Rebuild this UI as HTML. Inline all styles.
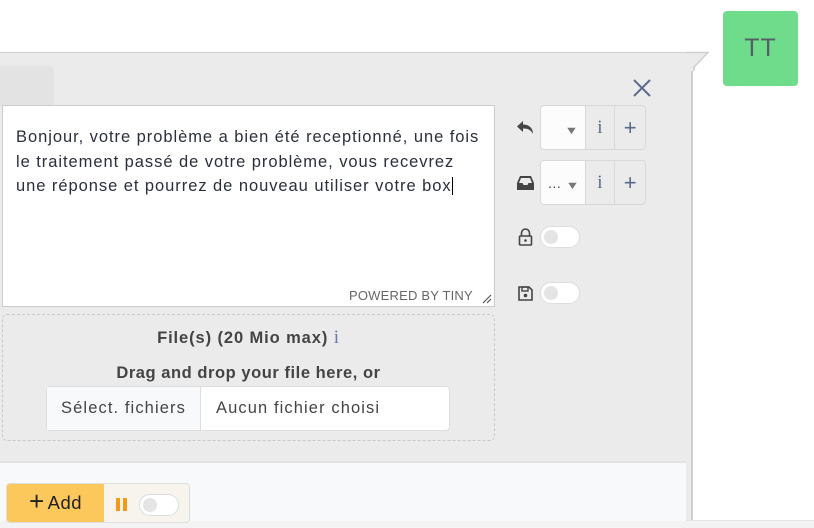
<!DOCTYPE html>
<html><head><meta charset="utf-8"><style>
*{box-sizing:border-box;margin:0;padding:0}
body{width:814px;height:528px;position:relative;background:#fff;font-family:"Liberation Sans",sans-serif;overflow:hidden;color:#333}
.abs{position:absolute}
.panel{left:0;top:52px;width:693px;height:470px;background:#ebebeb;border-top:1px solid #cfcfcf;border-right:2px solid #cfcfcf}
.tab{left:0;top:66px;width:54px;height:40px;background:#e3e3e3;border-radius:0 6px 0 0}
.editor{left:2px;top:105px;width:493px;height:202px;background:#fff;border:1px solid #ccc}
.txt{left:16px;top:125px;font-size:16.5px;line-height:24.5px;color:#2a2f3a;letter-spacing:0.95px;white-space:nowrap}
.grp{left:540px;width:106px;height:45px;border:1px solid #d8d8d8;border-radius:4px;display:flex;overflow:hidden}
.grp div{height:100%;display:flex;align-items:center;justify-content:center;color:#5a6a8a}
.sel{width:45px;background:#fcfcfc;border-right:1px solid #d8d8d8;font-size:14px;color:#444!important}
.i{width:30px;border-right:1px solid #d8d8d8;font-family:"Liberation Serif",serif;font-size:19px}
.p{width:30px;font-size:22px}
.tog{width:40px;height:22px;border-radius:11px;background:#fff;border:1px solid #ddd}
.tog:after{content:"";position:absolute;left:3px;top:3px;width:14px;height:14px;border-radius:50%;background:#e4e4e4}
.drop{left:2px;top:314px;width:493px;height:127px;border:1px dashed #c8c8c8;border-radius:5px;text-align:center;font-weight:bold;color:#444;font-size:16.5px}
.bottom{left:0;top:461px;width:686px;height:60px;background:#f8f9fb;border-top:2px solid #e2e2e2}
</style></head><body>
<div class="abs panel"></div>
<svg class="abs" style="left:686px;top:51px" width="24" height="20"><polygon points="0,2 22,2 8,17 8,20 0,20" fill="#ebebeb"/><polyline points="0,1.5 22,1.5 8,16 8,20" fill="none" stroke="#cfcfcf" stroke-width="1.5"/></svg>
<div class="abs" style="left:0;top:520px;width:814px;height:8px;background:#f3f3f3;border-top:1px solid #e4e4e4"></div>
<div class="abs" style="left:723px;top:11px;width:75px;height:75px;background:#6edc8a;border-radius:4px;color:#555f66;font-size:25px;display:flex;align-items:center;justify-content:center;letter-spacing:1px">TT</div>
<div class="abs tab"></div>
<svg class="abs" style="left:632px;top:78px" width="20" height="20"><path d="M2 2L18 18M18 2L2 18" stroke="#5a6a8a" stroke-width="2"/></svg>
<div class="abs editor"></div>
<div class="abs txt">Bonjour, votre problème a bien été receptionné, une fois<br>le traitement passé de votre problème, vous recevrez<br>une réponse et pourrez de nouveau utiliser votre box<span style="border-left:1px solid #000;margin-left:0"></span></div>
<div class="abs" style="left:349px;top:288px;font-size:13px;color:#666;letter-spacing:.2px">POWERED BY TINY</div>
<svg class="abs" style="left:481px;top:293px" width="11" height="11"><path d="M10 2L2 10M10 6L6 10" stroke="#555" stroke-width="1.2"/></svg>
<svg class="abs" style="left:516px;top:119px" width="20" height="18"><path d="M7 2L1 7.5L7 13V9.5C12 9.5 15 11 17 15C17 9 13 5.5 7 5.5Z" fill="#444"/></svg>
<div class="abs grp" style="top:105px"><div class="sel"><span style="margin-left:18px;margin-top:6px;font-size:11px;color:#777;transform:scaleX(1.3)">▼</span></div><div class="i">i</div><div class="p">+</div></div>
<svg class="abs" style="left:516px;top:174px" width="19" height="17"><path d="M1 9L4 2H15L18 9V16H1Z" fill="#444"/><path d="M3 9H6.5L7.5 11H11.5L12.5 9H16L14 4H5Z" fill="#ebebeb"/></svg>
<div class="abs grp" style="top:160px"><div class="sel">…<span style="margin-left:6px;margin-top:6px;font-size:11px;color:#777;transform:scaleX(1.3)">▼</span></div><div class="i">i</div><div class="p">+</div></div>
<svg class="abs" style="left:517px;top:228px" width="17" height="18"><path d="M4.5 8V5a4 4 0 0 1 8 0v3" fill="none" stroke="#444" stroke-width="1.6"/><rect x="2.5" y="8" width="12" height="9" rx="1" fill="none" stroke="#444" stroke-width="1.6"/><circle cx="8.5" cy="12.5" r="1.3" fill="#444"/></svg>
<div class="abs tog" style="left:540px;top:226px"></div>
<svg class="abs" style="left:517px;top:285px" width="17" height="17"><path d="M2 2H12L15 5V15H2Z" fill="none" stroke="#444" stroke-width="1.6"/><rect x="5" y="2" width="6" height="4" fill="none" stroke="#444" stroke-width="1.4"/><circle cx="8.5" cy="10.5" r="1.8" fill="#444"/></svg>
<div class="abs tog" style="left:540px;top:282px"></div>
<div class="abs drop">
<div style="margin-top:12px;letter-spacing:0.9px">File(s) (20 Mio max) <span style="font-family:'Liberation Serif',serif;color:#6a7aaa;font-weight:normal;font-size:19px">i</span></div>
<div style="margin-top:15px;letter-spacing:0.55px">Drag and drop your file here, or</div>
</div>
<div class="abs" style="left:46px;top:386px;width:404px;height:45px;background:#fff;border:1px solid #ddd;border-radius:4px;display:flex;font-size:16.5px;color:#444;letter-spacing:1.1px">
<div style="width:154px;background:#f8f9fb;border-right:1px solid #ddd;display:flex;align-items:center;justify-content:center">Sélect. fichiers</div>
<div style="padding-left:15px;display:flex;align-items:center">Aucun fichier choisi</div></div>
<div class="abs bottom"></div>
<div class="abs" style="left:6px;top:483px;width:184px;height:40px;border:1px solid #ddd;border-radius:4px;overflow:hidden;display:flex">
<div style="width:97px;background:#fcc75b;display:flex;align-items:center;justify-content:center;font-size:18.5px;color:#222;letter-spacing:0.5px"><span style="font-size:26px;margin-right:3px;margin-top:-3px">+</span>Add</div>
<div style="flex:1;background:#f7f4ee;position:relative"><div class="abs" style="left:12px;top:14px;width:4px;height:13px;background:#f39a12"></div><div class="abs" style="left:19px;top:14px;width:4px;height:13px;background:#f39a12"></div><div class="abs tog" style="left:35px;top:10px"></div></div>
</div>
</body></html>
